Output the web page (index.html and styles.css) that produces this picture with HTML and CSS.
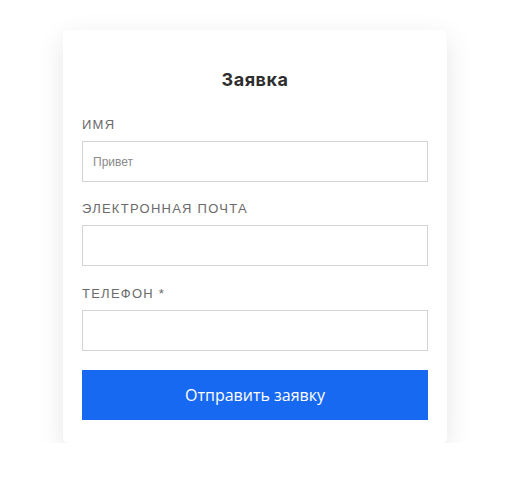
FILE: index.html
```html
<!DOCTYPE html>
<html lang="ru">
<head>
<meta charset="utf-8">
<title>Заявка</title>
<link rel="stylesheet" href="styles.css">
</head>
<body>
<form class="card">
  <h2 class="title">Заявка</h2>
  <div class="field">
    <label class="label">Имя</label>
    <input class="input" type="text" placeholder="Привет">
  </div>
  <div class="field">
    <label class="label">Электронная почта</label>
    <input class="input" type="email">
  </div>
  <div class="field">
    <label class="label">Телефон *</label>
    <input class="input" type="tel">
  </div>
  <button class="submit" type="button">Отправить заявку</button>
</form>
</body>
</html>
```
FILE: styles.css
```css
html, body {
  margin: 0;
  padding: 0;
  background: #ffffff;
}
body {
  font-family: "Liberation Sans", Arial, sans-serif;
}
.card {
  box-sizing: border-box;
  width: 384px;
  margin: 30px 0 0 63px;
  padding: 38px 19px 23px;
  background: #fff;
  border-radius: 5px;
  box-shadow: 0 8px 28px rgba(0, 0, 0, 0.1);
}
.title {
  margin: 0 0 24px;
  font-family: Inter, "Noto Sans", sans-serif;
  font-weight: 700;
  font-size: 18px;
  line-height: 24px;
  letter-spacing: 0.5px;
  text-align: center;
  color: #2e2e2e;
}
.field {
  display: flex;
  flex-direction: column;
  margin-bottom: 19px;
}
.field:first-of-type {
  margin-bottom: 18px;
}
.label {
  font-size: 13px;
  line-height: 17px;
  letter-spacing: 1.25px;
  text-transform: uppercase;
  color: #6b6b6b;
  margin-bottom: 8px;
}
.input {
  box-sizing: border-box;
  height: 41px;
  width: 100%;
  border: 1px solid #d3d3d3;
  border-radius: 0;
  padding: 0 10px;
  font-family: "Liberation Sans", Arial, sans-serif;
  font-size: 12px;
  color: #333;
  background: #fff;
  outline: none;
}
.input::placeholder {
  color: #8a8a8a;
}
.submit {
  display: block;
  width: 100%;
  height: 50px;
  border: none;
  border-radius: 0;
  background: #1869f1;
  color: #fff;
  font-family: "Open Sans", "Noto Sans", sans-serif;
  font-size: 16px;
  cursor: pointer;
}
```
